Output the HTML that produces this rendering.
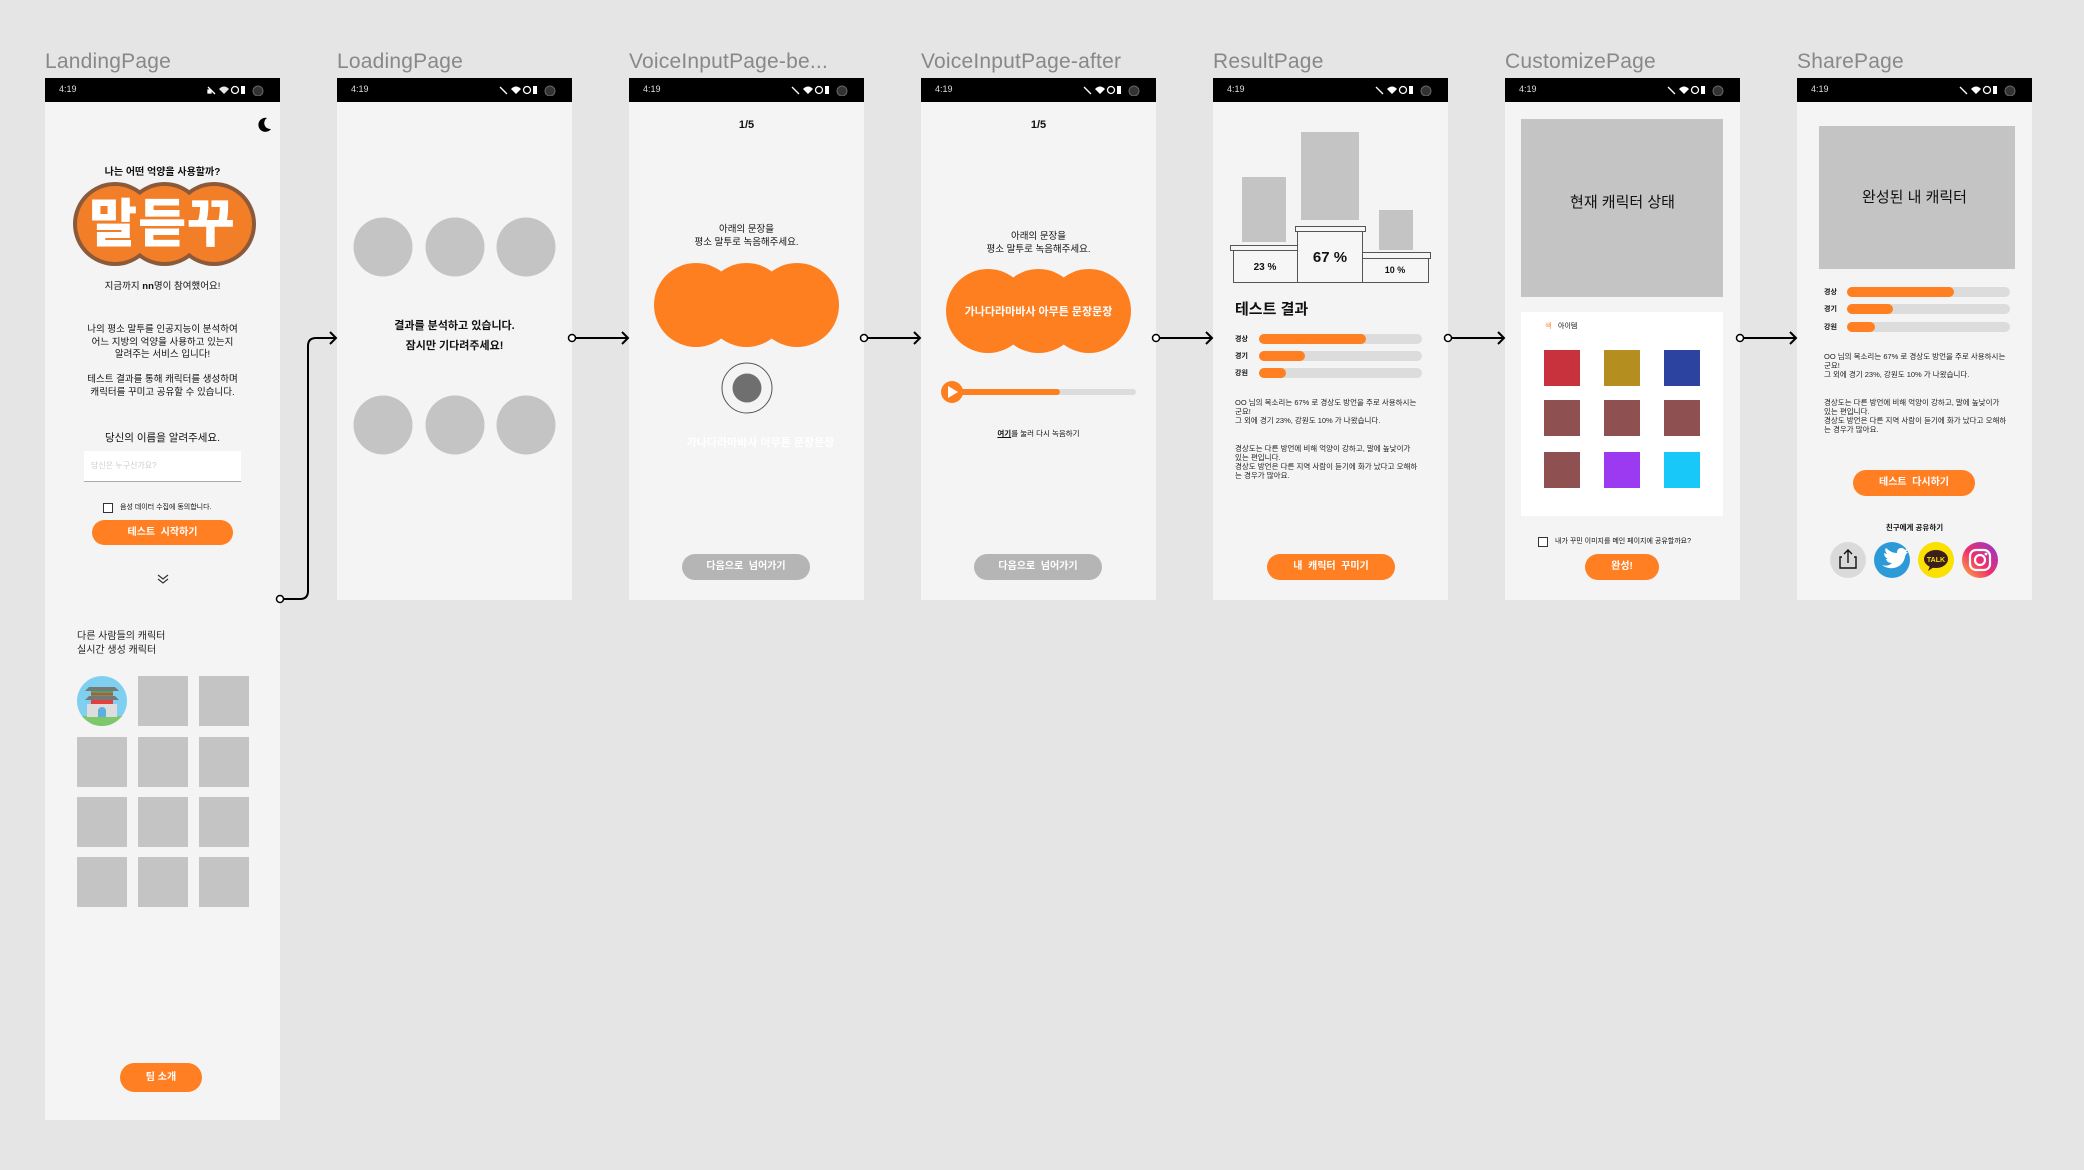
<!DOCTYPE html>
<html><head><meta charset="utf-8"><style>
*{margin:0;padding:0;box-sizing:border-box}
body{width:2084px;height:1170px;background:#e5e5e5;position:relative;overflow:hidden;font-family:"Liberation Sans","Noto Sans CJK KR",sans-serif;color:#111}
.t{position:absolute;top:50px;font-size:21px;color:#888;font-family:"Liberation Sans","Noto Sans CJK KR",sans-serif;letter-spacing:0.2px}
.f{position:absolute;top:78px;width:235px;background:#f4f4f4;overflow:hidden}
.sb{position:absolute;left:0;top:0;width:235px;height:24px;background:#000}
.sb .tm{position:absolute;left:14px;top:6px;font-size:9px;color:#ddd}
.a{position:absolute}
.c{position:absolute;left:0;width:235px;text-align:center}
.btn{position:absolute;height:26px;border-radius:13px;background:#ff7f22;color:#fff;font-weight:bold;font-size:10px;text-align:center;line-height:26px;white-space:pre}
.gbtn{background:#b5b5b5}
.g{position:absolute;background:#c4c4c4}
.trk{position:absolute;height:10px;border-radius:5px;background:#dcdcdc}
.fill{position:absolute;left:0;top:0;height:10px;border-radius:5px;background:#ff7f22}
.lb{position:absolute;font-size:7px;font-weight:bold}
.p{position:absolute;font-size:7.5px;line-height:9px;color:#222}
</style></head><body>

<div class="t" style="left:45px">LandingPage</div>
<div class="t" style="left:337px">LoadingPage</div>
<div class="t" style="left:629px">VoiceInputPage-be...</div>
<div class="t" style="left:921px">VoiceInputPage-after</div>
<div class="t" style="left:1213px">ResultPage</div>
<div class="t" style="left:1505px">CustomizePage</div>
<div class="t" style="left:1797px">SharePage</div>

<!-- LANDING -->
<div class="f" style="left:45px;height:1042px">
 <div class="sb"><span class="tm">4:19</span><svg class="a" style="left:160px;top:6px" width="70" height="12"><g fill="#fff"><path d="M3 3 L10 10 M3 6 h3 v3 h-3z" stroke="#fff" stroke-width="1.3"/><path d="M14 5 Q19 0 24 5 L19 10z" opacity=".9"/><circle cx="30" cy="6" r="3.5" fill="none" stroke="#fff" stroke-width="1.3"/><rect x="36" y="2" width="4" height="8"/></g><circle cx="53" cy="7" r="5" fill="#333" stroke="#666"/></svg></div>
 <svg class="a" style="left:210px;top:38px" width="18" height="18"><path d="M12 2 A7 7 0 1 0 16 13 A6 6 0 0 1 12 2z" fill="#000"/></svg>
 <div class="c" style="top:85px;font-size:10px;font-weight:bold">나는 어떤 억양을 사용할까?</div>
 <svg class="a" style="left:25px;top:101px" width="190" height="90">
  <g fill="#8b5a3a"><circle cx="45" cy="45" r="42"/><circle cx="94.5" cy="45" r="42"/><circle cx="144" cy="45" r="42"/></g>
  <g fill="#f27f28"><circle cx="45" cy="45" r="38"/><circle cx="94.5" cy="45" r="38"/><circle cx="144" cy="45" r="38"/></g>
 </svg>
 <div class="c" style="top:112px;font-size:52px;font-weight:900;color:#fff;letter-spacing:1px;line-height:70px">말듣꾸</div>
 <div class="c" style="top:200px;font-size:9.5px">지금까지 <b>nn</b>명이 참여했어요!</div>
 <div class="c" style="top:246px;font-size:9.5px;line-height:12.5px">나의 평소 말투를 인공지능이 분석하여<br>어느 지방의 억양을 사용하고 있는지<br>알려주는 서비스 입니다!</div>
 <div class="c" style="top:296px;font-size:9.5px;line-height:12.5px">테스트 결과를 통해 캐릭터를 생성하며<br>캐릭터를 꾸미고 공유할 수 있습니다.</div>
 <div class="c" style="top:352px;font-size:10.5px">당신의 이름을 알려주세요.</div>
 <div class="a" style="left:39px;top:373px;width:157px;height:31px;background:#fff;border-bottom:1px solid #aaa;font-size:8px;color:#ccc;padding:9px 7px">당신은 누구신가요?</div>
 <div class="a" style="left:58px;top:425px;width:10px;height:10px;border:1px solid #333;background:#fff"></div>
 <div class="a" style="left:75px;top:425px;font-size:7px;line-height:10px">음성 데이터 수집에 동의합니다.</div>
 <div class="btn" style="left:47px;top:442px;width:141px;height:25px;line-height:25px">테스트  시작하기</div>
 <svg class="a" style="left:111px;top:495px" width="14" height="12"><path d="M2 2 L7 6 L12 2 M2 6 L7 10 L12 6" fill="none" stroke="#333" stroke-width="1.2"/></svg>
 <div class="a" style="left:32px;top:552px;font-size:10px;line-height:14px;color:#222">다른 사람들의 캐릭터<br>실시간 생성 캐릭터</div>
 <svg class="a" style="left:32px;top:598px" width="50" height="50"><defs><clipPath id="cc"><circle cx="25" cy="25" r="25"/></clipPath></defs><g clip-path="url(#cc)"><rect width="50" height="50" fill="#7fd0f0"/><rect y="40" width="50" height="10" fill="#7cc86a"/><rect x="10" y="28" width="30" height="13" fill="#ddd"/><path d="M8 15 H42 L38 11 H12z" fill="#777"/><rect x="14" y="15" width="22" height="5" fill="#3fae5a"/><rect x="14" y="17" width="22" height="2" fill="#e04040"/><path d="M8 24 H42 L38 20 H12z" fill="#777"/><rect x="14" y="24" width="22" height="4" fill="#e04040"/><path d="M21 41 V35 A4 4 0 0 1 29 35 V41z" fill="#5bb0e0"/></g></svg>
 <div class="g" style="left:93px;top:598px;width:50px;height:50px"></div>
 <div class="g" style="left:154px;top:598px;width:50px;height:50px"></div>
 <div class="g" style="left:32px;top:659px;width:50px;height:50px"></div>
 <div class="g" style="left:93px;top:659px;width:50px;height:50px"></div>
 <div class="g" style="left:154px;top:659px;width:50px;height:50px"></div>
 <div class="g" style="left:32px;top:719px;width:50px;height:50px"></div>
 <div class="g" style="left:93px;top:719px;width:50px;height:50px"></div>
 <div class="g" style="left:154px;top:719px;width:50px;height:50px"></div>
 <div class="g" style="left:32px;top:779px;width:50px;height:50px"></div>
 <div class="g" style="left:93px;top:779px;width:50px;height:50px"></div>
 <div class="g" style="left:154px;top:779px;width:50px;height:50px"></div>
 <div class="btn" style="left:75px;top:985px;width:82px;height:29px;line-height:29px;border-radius:15px">팀 소개</div>
</div>

<!-- LOADING -->
<div class="f" style="left:337px;height:522px">
 <div class="sb"><span class="tm">4:19</span><svg class="a" style="left:160px;top:6px" width="70" height="12"><g fill="#fff"><path d="M3 3 L10 10" stroke="#fff" stroke-width="1.3"/><path d="M14 5 Q19 0 24 5 L19 10z"/><circle cx="30" cy="6" r="3.5" fill="none" stroke="#fff" stroke-width="1.3"/><rect x="36" y="2" width="4" height="8"/></g><circle cx="53" cy="7" r="5" fill="#333" stroke="#666"/></svg></div>
 <svg class="a" style="left:0;top:0" width="235" height="400"><g fill="#c4c4c4"><circle cx="46" cy="169" r="29.5"/><circle cx="118" cy="169" r="29.5"/><circle cx="189" cy="169" r="29.5"/><circle cx="46" cy="347" r="29.5"/><circle cx="118" cy="347" r="29.5"/><circle cx="189" cy="347" r="29.5"/></g></svg>
 <div class="c" style="top:238px;font-size:11px;font-weight:bold;line-height:20px">결과를 분석하고 있습니다.<br>잠시만 기다려주세요!</div>
</div>

<!-- VOICE BEFORE -->
<div class="f" style="left:629px;height:522px">
 <div class="sb"><span class="tm">4:19</span><svg class="a" style="left:160px;top:6px" width="70" height="12"><g fill="#fff"><path d="M3 3 L10 10" stroke="#fff" stroke-width="1.3"/><path d="M14 5 Q19 0 24 5 L19 10z"/><circle cx="30" cy="6" r="3.5" fill="none" stroke="#fff" stroke-width="1.3"/><rect x="36" y="2" width="4" height="8"/></g><circle cx="53" cy="7" r="5" fill="#333" stroke="#666"/></svg></div>
 <div class="c" style="top:41px;font-size:11px;font-weight:bold">1/5</div>
 <div class="c" style="top:146px;font-size:9.5px;line-height:12.5px">아래의 문장을<br>평소 말투로 녹음해주세요.</div>
 <svg class="a" style="left:0;top:0" width="235" height="400"><g fill="#fd7f20"><circle cx="67" cy="227" r="42"/><circle cx="117.5" cy="227" r="42"/><circle cx="168" cy="227" r="42"/></g><circle cx="118" cy="310" r="25" fill="none" stroke="#555" stroke-width="1"/><circle cx="118" cy="310" r="14.5" fill="#6f6f6f"/></svg>
 <div class="c" style="top:356px;left:14px;font-size:11px;font-weight:bold;color:#fff">가나다라마바사 아무튼 문장문장</div>
 <div class="btn gbtn" style="left:53px;top:476px;width:128px">다음으로  넘어가기</div>
</div>

<!-- VOICE AFTER -->
<div class="f" style="left:921px;height:522px">
 <div class="sb"><span class="tm">4:19</span><svg class="a" style="left:160px;top:6px" width="70" height="12"><g fill="#fff"><path d="M3 3 L10 10" stroke="#fff" stroke-width="1.3"/><path d="M14 5 Q19 0 24 5 L19 10z"/><circle cx="30" cy="6" r="3.5" fill="none" stroke="#fff" stroke-width="1.3"/><rect x="36" y="2" width="4" height="8"/></g><circle cx="53" cy="7" r="5" fill="#333" stroke="#666"/></svg></div>
 <div class="c" style="top:41px;font-size:11px;font-weight:bold">1/5</div>
 <div class="c" style="top:153px;font-size:9.5px;line-height:12.5px">아래의 문장을<br>평소 말투로 녹음해주세요.</div>
 <svg class="a" style="left:0;top:0" width="235" height="400"><g fill="#fd7f20"><circle cx="67" cy="233" r="42"/><circle cx="117.5" cy="233" r="42"/><circle cx="168" cy="233" r="42"/></g>
  <rect x="31" y="311" width="184" height="6" rx="3" fill="#dcdcdc"/><rect x="31" y="311" width="108" height="6" rx="3" fill="#fd7f20"/><circle cx="31" cy="314" r="11" fill="#fd7f20"/><path d="M27 308 L37 314 L27 320z" fill="#fff"/></svg>
 <div class="c" style="top:225px;font-size:11px;font-weight:bold;color:#fff">가나다라마바사 아무튼 문장문장</div>
 <div class="c" style="top:350px;font-size:7.5px"><b style="text-decoration:underline">여기</b>를 눌러 다시 녹음하기</div>
 <div class="btn gbtn" style="left:53px;top:476px;width:128px">다음으로  넘어가기</div>
</div>

<!-- RESULT -->
<div class="f" style="left:1213px;height:522px">
 <div class="sb"><span class="tm">4:19</span><svg class="a" style="left:160px;top:6px" width="70" height="12"><g fill="#fff"><path d="M3 3 L10 10" stroke="#fff" stroke-width="1.3"/><path d="M14 5 Q19 0 24 5 L19 10z"/><circle cx="30" cy="6" r="3.5" fill="none" stroke="#fff" stroke-width="1.3"/><rect x="36" y="2" width="4" height="8"/></g><circle cx="53" cy="7" r="5" fill="#333" stroke="#666"/></svg></div>
 <svg class="a" style="left:0;top:0" width="235" height="300"><g fill="#c4c4c4"><rect x="29" y="99" width="44" height="65"/><rect x="88" y="54" width="58" height="88"/><rect x="166" y="132" width="34" height="40"/></g>
 <g fill="#f6f6f6" stroke="#555" stroke-width="1"><rect x="20.5" y="172.5" width="64" height="32"/><rect x="17.5" y="167.5" width="67" height="5"/><rect x="149.5" y="180.5" width="66" height="24"/><rect x="149.5" y="174.5" width="68" height="6"/><rect x="84.5" y="152.5" width="65" height="52"/><rect x="82.5" y="148.5" width="70" height="5"/></g>
 <g font-weight="bold" fill="#111" text-anchor="middle" font-family="Liberation Sans,sans-serif"><text x="52" y="192" font-size="10">23 %</text><text x="117" y="184" font-size="15">67 %</text><text x="182" y="195" font-size="9">10 %</text></g></svg>
 <div class="a" style="left:22px;top:220px;font-size:15px;font-weight:bold">테스트 결과</div>
 <div class="lb" style="left:22px;top:256px">경상</div><div class="trk" style="left:46px;top:256px;width:163px"><div class="fill" style="width:107px"></div></div>
 <div class="lb" style="left:22px;top:273px">경기</div><div class="trk" style="left:46px;top:273px;width:163px"><div class="fill" style="width:46px"></div></div>
 <div class="lb" style="left:22px;top:290px">강원</div><div class="trk" style="left:46px;top:290px;width:163px"><div class="fill" style="width:27px"></div></div>
 <div class="p" style="left:22px;top:320px">OO 님의 목소리는 67% 로 경상도 방언을 주로 사용하시는<br>군요!<br>그 외에 경기 23%, 강원도 10% 가 나왔습니다.</div>
 <div class="p" style="left:22px;top:366px">경상도는 다른 방언에 비해 억양이 강하고, 말에 높낮이가<br>있는 편입니다.<br>경상도 방언은 다른 지역 사람이 듣기에 화가 났다고 오해하<br>는 경우가 많아요.</div>
 <div class="btn" style="left:54px;top:476px;width:128px">내  캐릭터  꾸미기</div>
</div>

<!-- CUSTOMIZE -->
<div class="f" style="left:1505px;height:522px">
 <div class="sb"><span class="tm">4:19</span><svg class="a" style="left:160px;top:6px" width="70" height="12"><g fill="#fff"><path d="M3 3 L10 10" stroke="#fff" stroke-width="1.3"/><path d="M14 5 Q19 0 24 5 L19 10z"/><circle cx="30" cy="6" r="3.5" fill="none" stroke="#fff" stroke-width="1.3"/><rect x="36" y="2" width="4" height="8"/></g><circle cx="53" cy="7" r="5" fill="#333" stroke="#666"/></svg></div>
 <div class="g" style="left:16px;top:41px;width:202px;height:178px"></div>
 <div class="c" style="top:113px;font-size:15px">현재 캐릭터 상태</div>
 <div class="a" style="left:16px;top:234px;width:202px;height:204px;background:#fff"></div>
 <div class="a" style="left:40px;top:243px;font-size:7px;color:#ff7f22">색</div>
 <div class="a" style="left:53px;top:243px;font-size:7px">아이템</div>
 <div class="a" style="left:39px;top:272px;width:36px;height:36px;background:#c8323c"></div>
 <div class="a" style="left:99px;top:272px;width:36px;height:36px;background:#b48e1e"></div>
 <div class="a" style="left:159px;top:272px;width:36px;height:36px;background:#2c44a0"></div>
 <div class="a" style="left:39px;top:322px;width:36px;height:36px;background:#8e5050"></div>
 <div class="a" style="left:99px;top:322px;width:36px;height:36px;background:#8e5050"></div>
 <div class="a" style="left:159px;top:322px;width:36px;height:36px;background:#8e5050"></div>
 <div class="a" style="left:39px;top:374px;width:36px;height:36px;background:#8e5050"></div>
 <div class="a" style="left:99px;top:374px;width:36px;height:36px;background:#9b3af0"></div>
 <div class="a" style="left:159px;top:374px;width:36px;height:36px;background:#18c8f8"></div>
 <div class="a" style="left:33px;top:459px;width:10px;height:10px;border:1px solid #333;background:#fff"></div>
 <div class="a" style="left:50px;top:459px;font-size:7px;line-height:10px">내가 꾸민 이미지를 메인 페이지에 공유할까요?</div>
 <div class="btn" style="left:80px;top:476px;width:74px">완성!</div>
</div>

<!-- SHARE -->
<div class="f" style="left:1797px;height:522px">
 <div class="sb"><span class="tm">4:19</span><svg class="a" style="left:160px;top:6px" width="70" height="12"><g fill="#fff"><path d="M3 3 L10 10" stroke="#fff" stroke-width="1.3"/><path d="M14 5 Q19 0 24 5 L19 10z"/><circle cx="30" cy="6" r="3.5" fill="none" stroke="#fff" stroke-width="1.3"/><rect x="36" y="2" width="4" height="8"/></g><circle cx="53" cy="7" r="5" fill="#333" stroke="#666"/></svg></div>
 <div class="g" style="left:22px;top:48px;width:196px;height:143px"></div>
 <div class="c" style="top:108px;font-size:15px">완성된 내 캐릭터</div>
 <div class="lb" style="left:27px;top:209px">경상</div><div class="trk" style="left:50px;top:209px;width:163px"><div class="fill" style="width:107px"></div></div>
 <div class="lb" style="left:27px;top:226px">경기</div><div class="trk" style="left:50px;top:226px;width:163px"><div class="fill" style="width:46px"></div></div>
 <div class="lb" style="left:27px;top:244px">강원</div><div class="trk" style="left:50px;top:244px;width:163px"><div class="fill" style="width:28px"></div></div>
 <div class="p" style="left:27px;top:274px">OO 님의 목소리는 67% 로 경상도 방언을 주로 사용하시는<br>군요!<br>그 외에 경기 23%, 강원도 10% 가 나왔습니다.</div>
 <div class="p" style="left:27px;top:320px">경상도는 다른 방언에 비해 억양이 강하고, 말에 높낮이가<br>있는 편입니다.<br>경상도 방언은 다른 지역 사람이 듣기에 화가 났다고 오해하<br>는 경우가 많아요.</div>
 <div class="btn" style="left:56px;top:392px;width:122px">테스트  다시하기</div>
 <div class="c" style="top:444px;font-size:7.5px;font-weight:bold">친구에게 공유하기</div>
 <svg class="a" style="left:0;top:460px" width="235" height="45">
  <circle cx="51" cy="22" r="18" fill="#dadada"/><path d="M45 19 H43 V30 H59 V19 H57 M51 25 V12 M47 16 L51 12 L55 16" fill="none" stroke="#111" stroke-width="1.4"/>
  <circle cx="95" cy="22" r="18" fill="#2d9ad8"/><path d="M85 27 Q91 29 95 25 Q90 25 89 21 Q91 21 91 21 Q87 19 87 15 Q89 16 90 16 Q87 12 89 10 Q94 15 100 15 Q100 10 104 10 Q107 10 108 12 L111 11 L109 14 L111 14 Q108 17 108 19 Q106 28 97 30 Q90 31 85 27z" fill="#fff"/>
  <circle cx="139" cy="22" r="18" fill="#fae100"/><ellipse cx="139" cy="21" rx="12" ry="9" fill="#3b1e1e"/><path d="M133 28 L131 33 L137 29z" fill="#3b1e1e"/><text x="139" y="24" font-size="7" font-weight="bold" fill="#fae100" text-anchor="middle" font-family="Liberation Sans,sans-serif">TALK</text>
  <defs><linearGradient id="ig" x1="0" y1="1" x2="1" y2="0"><stop offset="0" stop-color="#fdb33c"/><stop offset=".45" stop-color="#f0306a"/><stop offset="1" stop-color="#8a38d0"/></linearGradient></defs>
  <circle cx="183" cy="22" r="18" fill="url(#ig)"/><rect x="173" y="12" width="20" height="20" rx="6" fill="none" stroke="#fff" stroke-width="2.2"/><circle cx="183" cy="22" r="5" fill="none" stroke="#fff" stroke-width="2.2"/><circle cx="189" cy="16" r="1.4" fill="#fff"/>
 </svg>
</div>

<!-- connectors (on top) -->
<svg class="a" style="left:0;top:0;z-index:5" width="2084" height="1170">
<g fill="none" stroke="#000" stroke-width="2">
<path d="M283 599 H300 Q308 599 308 591 V346 Q308 338 316 338 H336"/>
<path d="M330 332 L336 338 L330 344"/>
<path d="M575 338 H628"/><path d="M622 332 L628 338 L622 344"/>
<path d="M867 338 H920"/><path d="M914 332 L920 338 L914 344"/>
<path d="M1159 338 H1212"/><path d="M1206 332 L1212 338 L1206 344"/>
<path d="M1451 338 H1504"/><path d="M1498 332 L1504 338 L1498 344"/>
<path d="M1743 338 H1796"/><path d="M1790 332 L1796 338 L1790 344"/>
</g>
<g fill="#fff" stroke="#000" stroke-width="1.5">
<circle cx="280" cy="599" r="3.5"/><circle cx="572" cy="338" r="3.5"/><circle cx="864" cy="338" r="3.5"/><circle cx="1156" cy="338" r="3.5"/><circle cx="1448" cy="338" r="3.5"/><circle cx="1740" cy="338" r="3.5"/>
</g>
</svg>

</body></html>
